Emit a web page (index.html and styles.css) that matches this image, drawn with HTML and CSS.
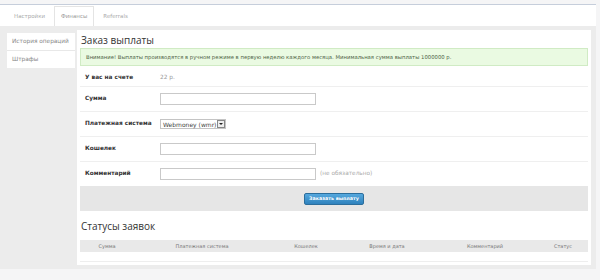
FILE: index.html
```html
<!DOCTYPE html>
<html>
	<head>
		<meta charset="UTF-8">
		<title>Финансы</title>
		<link rel="stylesheet" href="styles.css">
	</head>
	<body>
		<div class="page">
			<div class="tabs">
				<a class="tab">Настройки</a>
				<a class="tab active">Финансы</a>
				<a class="tab">Referrals</a>
			</div>
			<div class="layout">
				<ul class="side">
					<li>История операций</li>
					<li>Штрафы</li>
				</ul>
				<div class="main">
					<h2>Заказ выплаты</h2>
					<div class="alert">Внимание! Выплаты производятся в ручном режиме в первую неделю каждого месяца. Минимальная сумма выплаты 1000000 р.</div>
					<div class="row first">
						<span class="lbl">У вас на счете</span>
						<span class="val">22 р.</span>
					</div>
					<div class="row">
						<span class="lbl">Сумма</span>
						<input type="text" class="ipt">
					</div>
					<div class="row">
						<span class="lbl">Платежная система</span>
						<div class="select">Webmoney (wmr)<span class="arrow"></span></div>
					</div>
					<div class="row">
						<span class="lbl">Кошелек</span>
						<input type="text" class="ipt">
					</div>
					<div class="row last">
						<span class="lbl">Комментарий</span>
						<input type="text" class="ipt">
						<span class="hint">(не обязательно)</span>
					</div>
					<div class="actions">
						<button>Заказать выплату</button>
					</div>
					<h2 class="sub">Статусы заявок</h2>
					<table class="list">
						<thead>
							<tr>
								<th class="c1">Сумма</th>
								<th class="c2">Платежная система</th>
								<th class="c3">Кошелек</th>
								<th class="c4">Время и дата</th>
								<th class="c5">Комментарий</th>
								<th class="c6">Статус</th>
							</tr>
						</thead>
						<tbody>
							<tr><td colspan="6"></td></tr>
						</tbody>
					</table>
				</div>
			</div>
		</div>
	</body>
</html>
```
FILE: styles.css
```css
body {
	margin: 0;
	background: #f5f5f6;
	font-family: "DejaVu Sans", Verdana, sans-serif;
}

.page {
	width: 596px;
	padding-top: 4px;
}

.tabs {
	background: #fff;
	border-top: 1px solid #c6cedb;
	height: 21px;
	display: flex;
	align-items: flex-end;
	gap: 2px;
	padding-left: 7px;
}

.tab {
	font-size: 5.5px;
	color: #aaa;
	padding: 0 6px;
	height: 19px;
	line-height: 19px;
	border: 1px solid transparent;
	border-bottom: none;
}

.tab.active {
	border-color: #e4e4e4;
	color: #999;
}

.layout {
	background: #ececec;
	display: flex;
	align-items: flex-start;
	padding: 4px 4px 4px 7px;
}

.side {
	list-style: none;
	margin: 3px 0 0;
	padding: 0;
	width: 68px;
	background: #fff;
}

.side li {
	font-size: 5.8px;
	color: #888;
	height: 17px;
	line-height: 17px;
	padding-left: 5px;
	border-bottom: 1px solid #e8e8e8;
}

.side li:last-child {
	border-bottom: none;
}

.main {
	margin-left: 2px;
	width: 508px;
	background: #fff;
	padding: 0 3px 3px;
}

.main h2 {
	margin: 0;
	padding: 3px 1px 0;
	font-family: "Open Sans", "DejaVu Sans", sans-serif;
	font-weight: normal;
	font-size: 10px;
	line-height: 15px;
	color: #333;
}

.main h2.sub {
	padding-top: 8px;
	margin-bottom: 6px;
}

.alert {
	background: #eafae2;
	border: 1px solid #d0ebc4;
	height: 16px;
	line-height: 16px;
	padding: 0 5px;
	font-size: 5.3px;
	color: #4f6347;
}

.row {
	display: flex;
	align-items: flex-start;
	height: 18px;
	padding: 6px 0 0 5px;
	border-bottom: 1px solid #efefef;
}

.row.first {
	height: 14px;
}

.row.last {
	border-bottom: none;
}

.lbl {
	width: 75px;
	font-size: 5.8px;
	font-weight: bold;
	color: #333;
	line-height: 10px;
}

.val {
	font-size: 5.8px;
	color: #999;
	line-height: 10px;
}

.ipt {
	box-sizing: border-box;
	width: 156px;
	height: 12px;
	margin: 0;
	padding: 0;
	border: 1px solid #c9c9c9;
	outline: none;
}

.select {
	display: flex;
	align-items: center;
	box-sizing: border-box;
	height: 10px;
	border: 1px solid #c4c4c4;
	padding-left: 2px;
	font-size: 6px;
	color: #444;
	margin-top: 1px;
}

.arrow {
	box-sizing: border-box;
	width: 8px;
	height: 8px;
	margin-left: 1px;
	border: 1px solid #888;
	background: #eee;
	position: relative;
}

.arrow:after {
	content: "";
	position: absolute;
	left: 1px;
	top: 2px;
	border: 2px solid transparent;
	border-top: 2px solid #222;
}

.hint {
	font-size: 5.8px;
	color: #aaa;
	line-height: 10px;
	margin-left: 4px;
}

.actions {
	background: #e6e6e6;
	height: 25px;
	display: flex;
	justify-content: center;
	align-items: center;
}

.actions button {
	width: 60px;
	height: 12px;
	padding: 0;
	border: 1px solid #2c6e9c;
	border-radius: 2px;
	background: linear-gradient(#55a8de, #2f82bd);
	color: #fff;
	font-family: "DejaVu Sans", Verdana, sans-serif;
	font-size: 4.8px;
	font-weight: bold;
	cursor: pointer;
}

.list {
	width: 100%;
	border-collapse: collapse;
	table-layout: fixed;
}

.list th {
	background: #e9e9e9;
	height: 12px;
	padding: 0;
	font-size: 5px;
	font-weight: normal;
	color: #777;
	text-align: center;
}

.list td {
	height: 9px;
	padding: 0;
	border-bottom: 1px solid #eee;
}

.list .c1 { width: 54px; }
.list .c2 { width: 136px; }
.list .c3 { width: 72px; }
.list .c4 { width: 90px; }
.list .c5 { width: 106px; }
.list .c6 { width: 50px; }
```
